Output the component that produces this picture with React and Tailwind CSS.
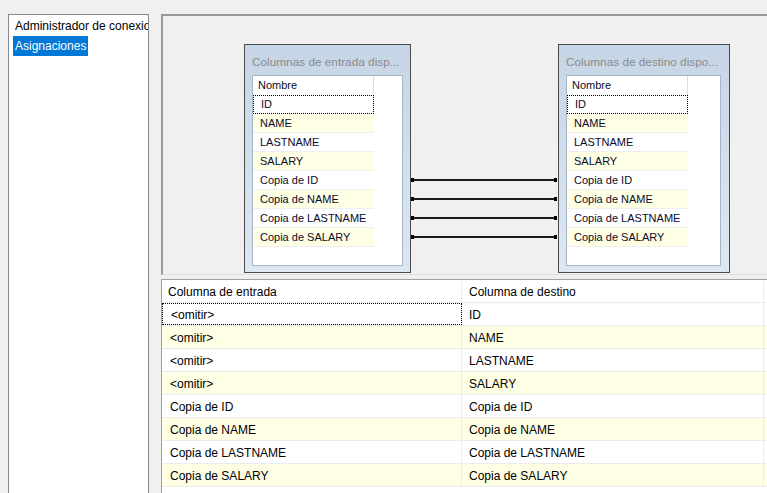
const items = ['ID', 'NAME', 'LASTNAME', 'SALARY', 'Copia de ID', 'Copia de NAME', 'Copia de LASTNAME', 'Copia de SALARY'];

const mappings = [
  ['<omitir>', 'ID'],
  ['<omitir>', 'NAME'],
  ['<omitir>', 'LASTNAME'],
  ['<omitir>', 'SALARY'],
  ['Copia de ID', 'Copia de ID'],
  ['Copia de NAME', 'Copia de NAME'],
  ['Copia de LASTNAME', 'Copia de LASTNAME'],
  ['Copia de SALARY', 'Copia de SALARY'],
];

function ColumnBox({ title, width, innerWidth, className }) {
  return (
    <div
      className={`absolute top-[28px] flex h-[229px] flex-col border border-[#4b4b4b] bg-gradient-to-b from-[#c6d5e5] to-[#dce7f3] px-[7px] ${className}`}
      style={{ width }}
    >
      <div className="h-[30px] shrink-0 overflow-hidden whitespace-nowrap pt-[10px] text-[11.8px] leading-[15px] text-[#8a8a8a]">
        {title}
      </div>
      <div className="mb-[6px] flex-1 border border-[#a9b5c4] bg-white" style={{ width: innerWidth }}>
        <div className="flex h-[19px] w-[121px] items-center border-r border-[#dcdcdc] pl-[5px] text-[11px] text-[#0a0a28]">
          Nombre
        </div>
        {items.map((name, i) => (
          <div
            key={name}
            className={`flex h-[19px] w-[121px] items-center border-b pl-[7px] text-[11px] text-[#0a0a28] ${
              i === 0 ? 'border border-dotted border-black' : 'border-[#efefef]'
            } ${i % 2 === 1 ? 'bg-[#ffffe6]' : 'bg-white'}`}
          >
            {name}
          </div>
        ))}
      </div>
    </div>
  );
}

function Link({ top }) {
  return (
    <div className="absolute left-[248px] flex w-[146px] items-center" style={{ top }}>
      <div className="h-[4px] w-[3px] bg-black" />
      <div className="h-[2px] flex-1 bg-[#1a1a1a]" />
      <div className="h-[4px] w-[3px] bg-black" />
    </div>
  );
}

export default function App() {
  return (
    <div
      className="flex h-[493px] w-[767px] overflow-hidden bg-[#f0f0f0] text-[12px] text-black"
      style={{ fontFamily: '"Liberation Sans", Arial, sans-serif' }}
    >
      <aside className="ml-[8px] mt-[14px] h-[500px] w-[141px] shrink-0 border border-[#858a91] bg-white">
        <div className="overflow-hidden whitespace-nowrap pl-[6px] pt-[3px] leading-[16px]">
          Administrador de conexiones
        </div>
        <div className="ml-[4px] mt-[2px] inline-flex h-[20px] items-center bg-[#0078d7] px-[2px] text-white">
          Asignaciones
        </div>
      </aside>

      <main className="ml-[12px] mt-[14px] flex min-w-0 flex-1 flex-col">
        <div className="relative h-[261px] shrink-0 border-b border-l-2 border-t-2 border-b-[#dedede] border-l-[#9a9a9a] border-t-[#9a9a9a] bg-[#f0f0f0]">
          <ColumnBox title="Columnas de entrada disp..." width={167} innerWidth={151} className="left-[81px]" />
          <ColumnBox title="Columnas de destino dispo..." width={172} innerWidth={155} className="left-[395px]" />
          <Link top={162} />
          <Link top={181} />
          <Link top={200} />
          <Link top={219} />
        </div>

        <div className="mt-[4px] flex-1 border-l border-t border-[#a0a0a0] bg-white">
          <div className="flex h-[23px] border-b border-[#ececec] pt-[1px]">
            <div className="flex w-[300px] items-center border-r border-[#ececec] pl-[6px]">Columna de entrada</div>
            <div className="flex w-[302px] items-center border-r border-[#ececec] pl-[7px]">Columna de destino</div>
          </div>
          {mappings.map(([src, dst], i) => (
            <div key={i} className={`flex h-[23px] border-b border-[#ececec] ${i % 2 === 1 ? 'bg-[#ffffe6]' : 'bg-white'}`}>
              <div
                className={`flex w-[300px] items-center pl-[8px] pt-[1px] ${
                  i === 0 ? 'border border-dotted border-black' : 'border-r border-[#ececec]'
                }`}
              >
                {src}
              </div>
              <div className="flex w-[302px] items-center border-r border-[#ececec] pl-[7px] pt-[1px]">{dst}</div>
            </div>
          ))}
        </div>
      </main>
    </div>
  );
}
